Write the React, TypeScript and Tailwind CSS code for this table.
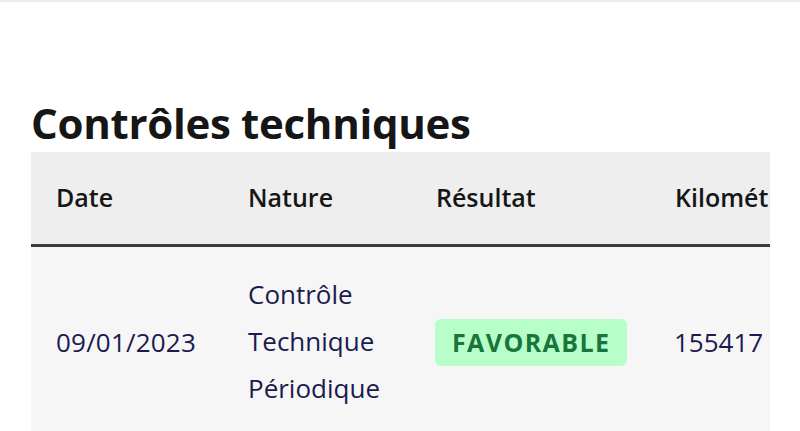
import React from "react";

export default function App() {
  const font = { fontFamily: "'Open Sans', 'Noto Sans', sans-serif" };
  return (
    <div className="w-[800px] h-[431px] overflow-hidden bg-white" style={font}>
      <div className="h-[2px] bg-[#ececec]" />
      <div className="pl-[31px] pt-[92px]">
        <h1 className="text-[42px] leading-[58px] font-bold text-[#161616] tracking-[-0.3px]">
          Contrôles techniques
        </h1>
      </div>
      <div className="ml-[31px] w-[739px] overflow-hidden">
        <table className="w-[820px] border-collapse text-left">
          <thead>
            <tr className="bg-[#eeeeee] border-b-[3px] border-[#3a3a3a]">
              <th className="w-[193px] h-[93px] pl-[25px] text-[25px] font-[650] text-[#161616]">Date</th>
              <th className="w-[188px] pl-[24px] text-[25px] font-[650] text-[#161616]">Nature</th>
              <th className="w-[239px] pl-[24px] text-[25px] font-[650] text-[#161616]">Résultat</th>
              <th className="pl-[24px] text-[25px] font-[650] text-[#161616]">Kilométrage</th>
            </tr>
          </thead>
          <tbody>
            <tr className="bg-[#f6f6f6]">
              <td className="pl-[25px] pt-[3px] text-[26px] tracking-[0.2px] text-[#1b1b4f]">09/01/2023</td>
              <td className="pl-[24px] pt-[24px] pb-[24px] text-[26px] leading-[47px] text-[#1b1b4f]">
                Contrôle
                <br />
                Technique
                <br />
                Périodique
              </td>
              <td className="pl-[23px] pt-[3px]">
                <span className="inline-flex items-center h-[47px] px-[17px] rounded-[6px] bg-[#b8fec9] text-[#18753c] text-[25px] font-bold tracking-[1.4px]">
                  FAVORABLE
                </span>
              </td>
              <td className="pl-[23px] pt-[3px] text-[26px] text-[#1b1b4f]">155417</td>
            </tr>
          </tbody>
        </table>
      </div>
    </div>
  );
}
